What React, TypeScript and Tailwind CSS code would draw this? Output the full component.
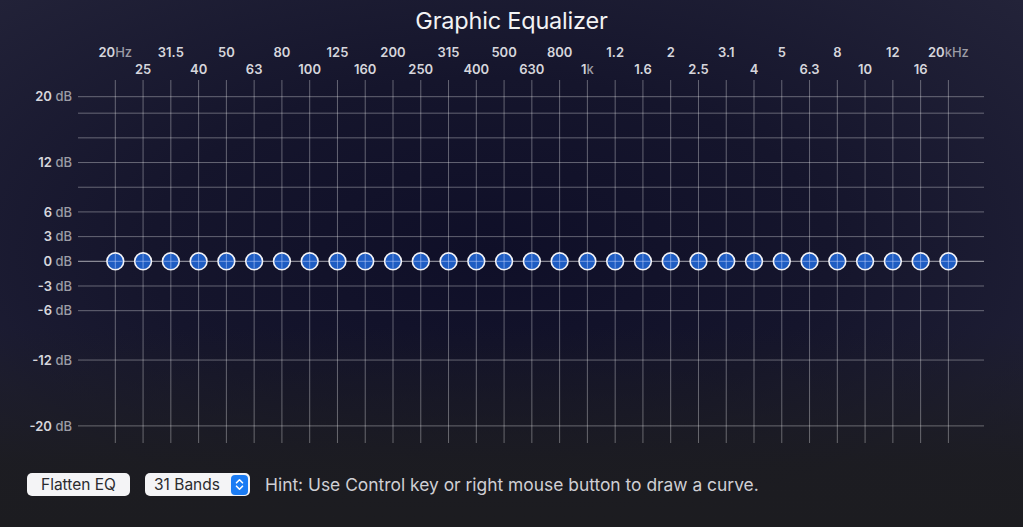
import React from "react";

const bands = [
  "20", "25", "31.5", "40", "50", "63", "80", "100", "125", "160", "200",
  "250", "315", "400", "500", "630", "800", "1", "1.2", "1.6", "2", "2.5",
  "3.1", "4", "5", "6.3", "8", "10", "12", "16", "20",
];

const units: Record<number, string> = { 0: "Hz", 17: "k", 30: "kHz" };

// dB value -> page y
const dbY = (db: number) => 261.3 - 8.23 * db;
const bandX = (i: number) => 115.3 + 27.77 * i;

const gridDb = [20, 18, 15, 12, 9, 6, 3, 0, -3, -6, -12, -20];
const labelDb = [20, 12, 6, 3, 0, -3, -6, -12, -20];

function EqChart() {
  const grid = "rgba(255,255,255,0.34)";
  return (
    <svg
      width={1023}
      height={410}
      viewBox="0 40 1023 410"
      className="block"
      style={{ fontFamily: "Inter, 'Noto Sans', sans-serif" }}
    >
      {/* frequency labels */}
      {bands.map((b, i) => (
        <text
          key={`f${i}`}
          x={bandX(i)}
          y={i % 2 === 0 ? 56.5 : 74.2}
          textAnchor="middle"
          fontSize={13}
          fontWeight={600}
          fill="#d6d6dc"
        >
          {b}
          {units[i] && (
            <tspan fill="#9c9ca6" fontWeight={500}>
              {units[i]}
            </tspan>
          )}
        </text>
      ))}

      {/* dB labels */}
      {labelDb.map((d) => (
        <text
          key={`d${d}`}
          x={72}
          y={dbY(d) + 4.6}
          textAnchor="end"
          fontSize={13}
          fontWeight={600}
          fill="#d6d6dc"
        >
          {d}
          <tspan fill="#9c9ca6" fontWeight={500}>
            {" dB"}
          </tspan>
        </text>
      ))}

      {/* horizontal grid */}
      {gridDb.map((d) => (
        <line
          key={`h${d}`}
          x1={78}
          x2={984}
          y1={dbY(d)}
          y2={dbY(d)}
          stroke={d === 0 ? "rgba(255,255,255,0.62)" : grid}
          strokeWidth={1}
        />
      ))}

      {/* vertical grid */}
      {bands.map((_, i) => (
        <line
          key={`v${i}`}
          x1={bandX(i)}
          x2={bandX(i)}
          y1={80}
          y2={443}
          stroke={grid}
          strokeWidth={1}
        />
      ))}

      {/* band knobs */}
      {bands.map((_, i) => {
        const x = bandX(i);
        const y = dbY(0);
        return (
          <g key={`k${i}`}>
            <circle cx={x} cy={y} r={8.4} fill="#1e5cc2" stroke="#f2f2f6" strokeWidth={1.6} />
            <line x1={x - 7.6} x2={x + 7.6} y1={y} y2={y} stroke="rgba(190,210,255,0.55)" strokeWidth={1} />
            <line x1={x} x2={x} y1={y - 7.6} y2={y + 7.6} stroke="rgba(190,210,255,0.55)" strokeWidth={1} />
          </g>
        );
      })}
    </svg>
  );
}

function Stepper() {
  return (
    <span className="flex h-[20px] w-[17px] items-center justify-center rounded-[4px] bg-[#1b7cf4]">
      <svg width="9" height="13" viewBox="0 0 9 13" fill="none">
        <path d="M1.5 4.8 L4.5 1.8 L7.5 4.8" stroke="white" strokeWidth="1.6" strokeLinecap="round" strokeLinejoin="round" />
        <path d="M1.5 8.2 L4.5 11.2 L7.5 8.2" stroke="white" strokeWidth="1.6" strokeLinecap="round" strokeLinejoin="round" />
      </svg>
    </span>
  );
}

export default function App() {
  return (
    <div className="h-[527px] w-[1023px] overflow-hidden bg-[linear-gradient(to_bottom,rgba(28,28,32,0)_62%,rgba(28,28,32,0.9)_88%,#1c1c20_100%),radial-gradient(ellipse_at_48%_48%,#0f0f28_0%,#15152c_45%,#24243a_100%)] font-['Inter','Noto_Sans',sans-serif]">
      <h1 className="flex h-10 items-center justify-center pt-[1px] text-[23.5px] font-normal tracking-[-0.2px] text-[#f2f2f4]">
        Graphic Equalizer
      </h1>

      <EqChart />

      <div className="mt-[23px] flex items-center pl-[27px]">
        <button className="h-[23px] w-[103px] rounded-[5px] bg-[#f4f4f6] text-[15.5px] leading-none text-[#2b2b2e]">
          Flatten EQ
        </button>
        <div className="ml-[15px] flex h-[23px] w-[105px] items-center justify-between rounded-[5px] bg-[#f4f4f6] pl-[9px] pr-[2px]">
          <span className="text-[15.5px] leading-none text-[#2b2b2e]">31 Bands</span>
          <Stepper />
        </div>
        <p className="ml-[15px] text-[17.4px] leading-none text-[#cfcfd4]">
          Hint: Use Control key or right mouse button to draw a curve.
        </p>
      </div>
    </div>
  );
}
